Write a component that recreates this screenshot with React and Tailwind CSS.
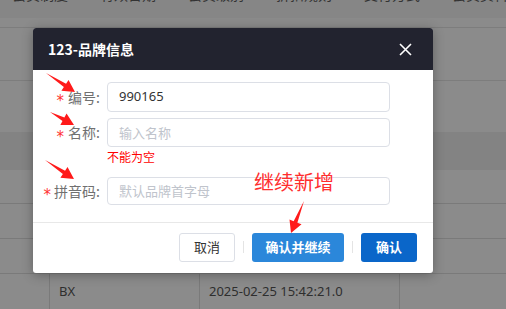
import React from "react";

const cjk = { fontFamily: '"Noto Sans CJK SC", "Noto Sans", sans-serif' };

// tapered annotation arrow, computed from tail and tip points
function arrowPoints([x1, y1], [x2, y2]) {
  const dx = x2 - x1;
  const dy = y2 - y1;
  const len = Math.hypot(dx, dy);
  const ux = dx / len;
  const uy = dy / len;
  const nx = -uy;
  const ny = ux;
  const headLen = 12;
  const headW = 6.5;
  const shaftW = 2;
  const bx = x2 - ux * headLen;
  const by = y2 - uy * headLen;
  const pts = [
    [x1, y1],
    [bx + nx * shaftW, by + ny * shaftW],
    [bx + nx * headW, by + ny * headW],
    [x2, y2],
    [bx - nx * headW, by - ny * headW],
    [bx - nx * shaftW, by - ny * shaftW],
  ];
  return pts.map((p) => p.join(",")).join(" ");
}

const arrows = [
  [[46, 73], [75, 92]],
  [[50, 112], [74, 125]],
  [[45, 160], [74, 179]],
  [[304, 201], [291, 233]],
];

const headers = ["会员制度", "有效日期", "会员级别", "折扣规则", "支付方式", "会员资料"];

function FormRow({ label, wide, children }) {
  return (
    <div className="flex items-center">
      <div className="w-[67px] flex justify-end items-center text-[14px] text-[#707070]" style={cjk}>
        <span
          className={`text-[#f33] text-[15px] leading-[14px] relative top-[4px] ${wide ? "mr-[3px]" : "mr-[4px]"}`}
          style={{ fontFamily: '"DejaVu Sans", sans-serif' }}
        >
          *
        </span>
        <span>{label}:</span>
      </div>
      <div className="ml-[7px]">{children}</div>
    </div>
  );
}

export default function App() {
  return (
    <div className="relative w-[506px] h-[309px] overflow-hidden bg-[#8b8b8b]" style={cjk}>
      {/* dimmed table behind the dialog */}
      <div className="flex flex-col">
        <div className="h-[18px] bg-[#868686] flex text-[14px] leading-[20px] text-[#333] overflow-hidden">
          {headers.map((h) => (
            <div key={h} className="w-[88px] shrink-0 pl-[12px] -mt-[16px]">{h}</div>
          ))}
        </div>
        <div className="h-[10px] border-b border-[#7d7d7d]" />
        <div className="h-[53px] border-b border-[#7d7d7d]" />
        <div className="h-[51px]" />
        <div className="h-[38px] bg-[#838383]" />
        <div className="h-[34px] border-b border-[#7a7a7a]" />
        <div className="h-[35px] border-b border-[#7a7a7a]" />
        <div className="h-[35px] border-b border-[#7a7a7a]" />
        <div className="flex h-[35px] text-[13px] text-[#2e2e2e]" style={{ fontFamily: '"Noto Sans", sans-serif' }}>
          <div className="w-[50px] border-r border-[#7a7a7a]" />
          <div className="w-[150px] border-r border-[#7a7a7a] pl-[9px] pt-[8px]">BX</div>
          <div className="w-[200px] border-r border-[#7a7a7a] pl-[9px] pt-[8px]">2025-02-25 15:42:21.0</div>
          <div className="flex-1" />
        </div>
      </div>

      {/* dialog */}
      <div className="absolute left-[33px] top-[28px] w-[400px] h-[245px] bg-white rounded-[3px] overflow-hidden shadow-[0_2px_12px_rgba(0,0,0,0.3)] flex flex-col">
        <div className="h-[42px] bg-[#22232f] flex items-center justify-between pl-[15px] pr-[21px]">
          <span className="text-white text-[14px] font-bold">123-品牌信息</span>
          <svg width="13" height="13" viewBox="0 0 13 13" fill="none" stroke="white" strokeWidth="1.6">
            <path d="M1 1 L12 12 M12 1 L1 12" />
          </svg>
        </div>

        <div className="flex-1 pt-[12px] flex flex-col">
          <FormRow label="编号">
            <div className="w-[283px] h-[30px] border border-[#dcdfe6] rounded-[4px] flex items-center px-[11px] text-[13px] text-[#333]" style={{ fontFamily: '"Noto Sans", sans-serif' }}>
              990165
            </div>
          </FormRow>
          <div className="h-[6px]" />
          <FormRow label="名称">
            <div className="w-[283px] h-[29px] border border-[#dcdfe6] rounded-[4px] flex items-center px-[11px] text-[13px] text-[#c0c4cc]">
              输入名称
            </div>
          </FormRow>
          <div className="pl-[74px] h-[30px] pt-[2px] text-[12px] text-[#f00] leading-[16px]">不能为空</div>
          <FormRow label="拼音码" wide>
            <div className="w-[283px] h-[28px] border border-[#dcdfe6] rounded-[4px] flex items-center px-[11px] text-[13px] text-[#c0c4cc]">
              默认品牌首字母
            </div>
          </FormRow>
        </div>

        <div className="h-[51px] border-t border-[#e8e8e8] flex items-center justify-end pr-[16px] pb-[2px]">
          <button className="w-[56px] h-[29px] border border-[#dcdfe6] rounded-[3px] bg-white text-[13px] text-[#333]">取消</button>
          <div className="w-px h-[12px] bg-[#e4e4e4] mx-[8px]" />
          <button className="w-[92px] h-[29px] rounded-[3px] bg-[#2b87da] text-[13px] text-white font-bold">确认并继续</button>
          <div className="w-px h-[12px] bg-[#e4e4e4] mx-[8px]" />
          <button className="w-[56px] h-[29px] rounded-[3px] bg-[#0a66c9] text-[13px] text-white font-bold">确认</button>
        </div>
      </div>

      {/* red annotation label */}
      <div className="absolute left-[254px] top-[168px] text-[20px] leading-[28px] text-[#ff2e2e]">继续新增</div>

      {/* annotation arrows */}
      <svg className="absolute inset-0" width="506" height="309">
        {arrows.map(([a, b], i) => (
          <polygon key={i} points={arrowPoints(a, b)} fill="#ff1a1a" />
        ))}
      </svg>
    </div>
  );
}
